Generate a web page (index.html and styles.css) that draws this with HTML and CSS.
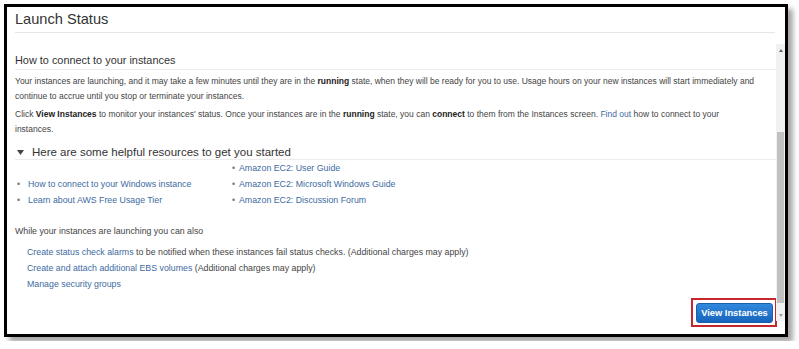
FILE: index.html
```html
<!DOCTYPE html>
<html lang="en">
<head>
    <meta charset="UTF-8">
    <title>Launch Status</title>
    <link rel="stylesheet" href="styles.css">
</head>
<body>
    <div class="frame">
        <div class="frame-head">
            <h1>Launch Status</h1>
        </div>
        <div class="frame-body">
            <div class="content">
                <h2>How to connect to your instances</h2>
                <p class="intro">Your instances are launching, and it may take a few minutes until they are in the <b>running</b> state, when they will be ready for you to use. Usage hours on your new instances will start immediately and continue to accrue until you stop or terminate your instances.</p>
                <p class="intro second">Click <b>View Instances</b> to monitor your instances' status. Once your instances are in the <b>running</b> state, you can <b>connect</b> to them from the Instances screen. <a href="#">Find out</a> how to connect to your<br>instances.</p>

                <h3 class="toggle">
                    <svg class="caret" width="7" height="5" viewBox="0 0 7 5"><path d="M0 0 L7 0 L3.5 5 Z" fill="#444"/></svg>
                    Here are some helpful resources to get you started
                </h3>
                <div class="resources">
                    <ul class="res-col res-left">
                        <li><a href="#">How to connect to your Windows instance</a></li>
                        <li><a href="#">Learn about AWS Free Usage Tier</a></li>
                    </ul>
                    <ul class="res-col res-right">
                        <li><a href="#">Amazon EC2: User Guide</a></li>
                        <li><a href="#">Amazon EC2: Microsoft Windows Guide</a></li>
                        <li><a href="#">Amazon EC2: Discussion Forum</a></li>
                    </ul>
                </div>

                <p class="also">While your instances are launching you can also</p>
                <ul class="also-list">
                    <li><a href="#">Create status check alarms</a> to be notified when these instances fail status checks. (Additional charges may apply)</li>
                    <li><a href="#">Create and attach additional EBS volumes</a> (Additional charges may apply)</li>
                    <li><a href="#">Manage security groups</a></li>
                </ul>

                <div class="actions">
                    <span class="highlight">
                        <button class="btn-primary">View Instances</button>
                    </span>
                </div>
            </div>
            <div class="scrollbar">
                <span class="arrow up"></span>
                <div class="track"><div class="thumb"></div></div>
                <span class="arrow down"></span>
            </div>
        </div>
    </div>
</body>
</html>
```
FILE: styles.css
```css
/* Basic reset */
* {
    box-sizing: border-box;
    margin: 0;
    padding: 0;
}

body {
    font-family: "Liberation Sans", Arial, sans-serif;
    background-color: #fff;
    color: #444;
}

a {
    color: #3d6aa2;
    text-decoration: none;
}

.frame {
    margin: 4px;
    width: 784px;
    height: 333px;
    border: 3px solid #000;
    background-color: #fff;
    box-shadow: 5px 5px 5px rgba(0, 0, 0, 0.35);
    display: flex;
    flex-direction: column;
}

.frame-head {
    padding: 2px 10px 0 8px;
}

.frame-head h1 {
    font-size: 14.6px;
    font-weight: normal;
    line-height: 20px;
    color: #333;
    padding-bottom: 3px;
    border-bottom: 1px solid #e6e6e6;
}

.frame-body {
    flex: 1;
    display: flex;
    margin-top: 11px;
    min-height: 0;
}

.content {
    flex: 1;
    padding-left: 8px;
    font-size: 8.5px;
    line-height: 15px;
}

.content h2 {
    font-size: 10.9px;
    font-weight: normal;
    color: #333;
    line-height: 16px;
    margin-top: 8px;
    padding-bottom: 1px;
    border-bottom: 1px solid #ececec;
}

.intro {
    margin-top: 4px;
}

.intro.second {
    margin-top: 3px;
}

.intro b {
    color: #222;
}

.toggle {
    margin-top: 8px;
    font-size: 11.5px;
    font-weight: normal;
    color: #333;
    line-height: 14px;
    border-bottom: 1px solid #ececec;
    display: flex;
    align-items: center;
}

.caret {
    margin: 0 8px 0 2px;
}

.resources {
    display: flex;
    align-items: flex-end;
    line-height: 16px;
    font-size: 8.8px;
}

.res-col {
    list-style: none;
}

.res-left {
    width: 215px;
}

.res-col li::before {
    content: "\2022";
    color: #777;
    display: inline-block;
    padding-left: 2px;
}

.res-left li::before {
    width: 11px;
}

.res-right li::before {
    width: 7px;
}

.also {
    margin-top: 16px;
    font-size: 8.8px;
}

.also-list {
    list-style: none;
    margin-top: 5px;
    padding-left: 12px;
    line-height: 16px;
    font-size: 8.8px;
}

.actions {
    display: flex;
    justify-content: flex-end;
    margin-top: 6px;
}

.highlight {
    display: flex;
    padding: 3px 2px 2px 3px;
    border: 2px solid #c8262e;
    margin-right: -1px;
}

.btn-primary {
    width: 77px;
    height: 20px;
    font-family: "Liberation Sans", Arial, sans-serif;
    font-size: 9.3px;
    font-weight: bold;
    color: #fff;
    background: linear-gradient(#3189dc, #1864bd);
    border: 1px solid #1a5fae;
    border-radius: 3px;
}

.scrollbar {
    width: 9px;
    height: 277px;
    background-color: #f1f1f1;
    display: flex;
    flex-direction: column;
    align-items: center;
}

.arrow {
    height: 12px;
    display: flex;
    align-items: center;
}

.arrow::before {
    content: "";
    border-left: 2.5px solid transparent;
    border-right: 2.5px solid transparent;
}

.arrow.up::before {
    border-bottom: 3px solid #606060;
}

.arrow.down::before {
    border-top: 3px solid #a0a0a0;
}

.track {
    flex: 1;
    width: 100%;
    padding: 0 1px;
}

.thumb {
    margin-top: 76px;
    height: 171px;
    background-color: #c1c1c1;
}
```
